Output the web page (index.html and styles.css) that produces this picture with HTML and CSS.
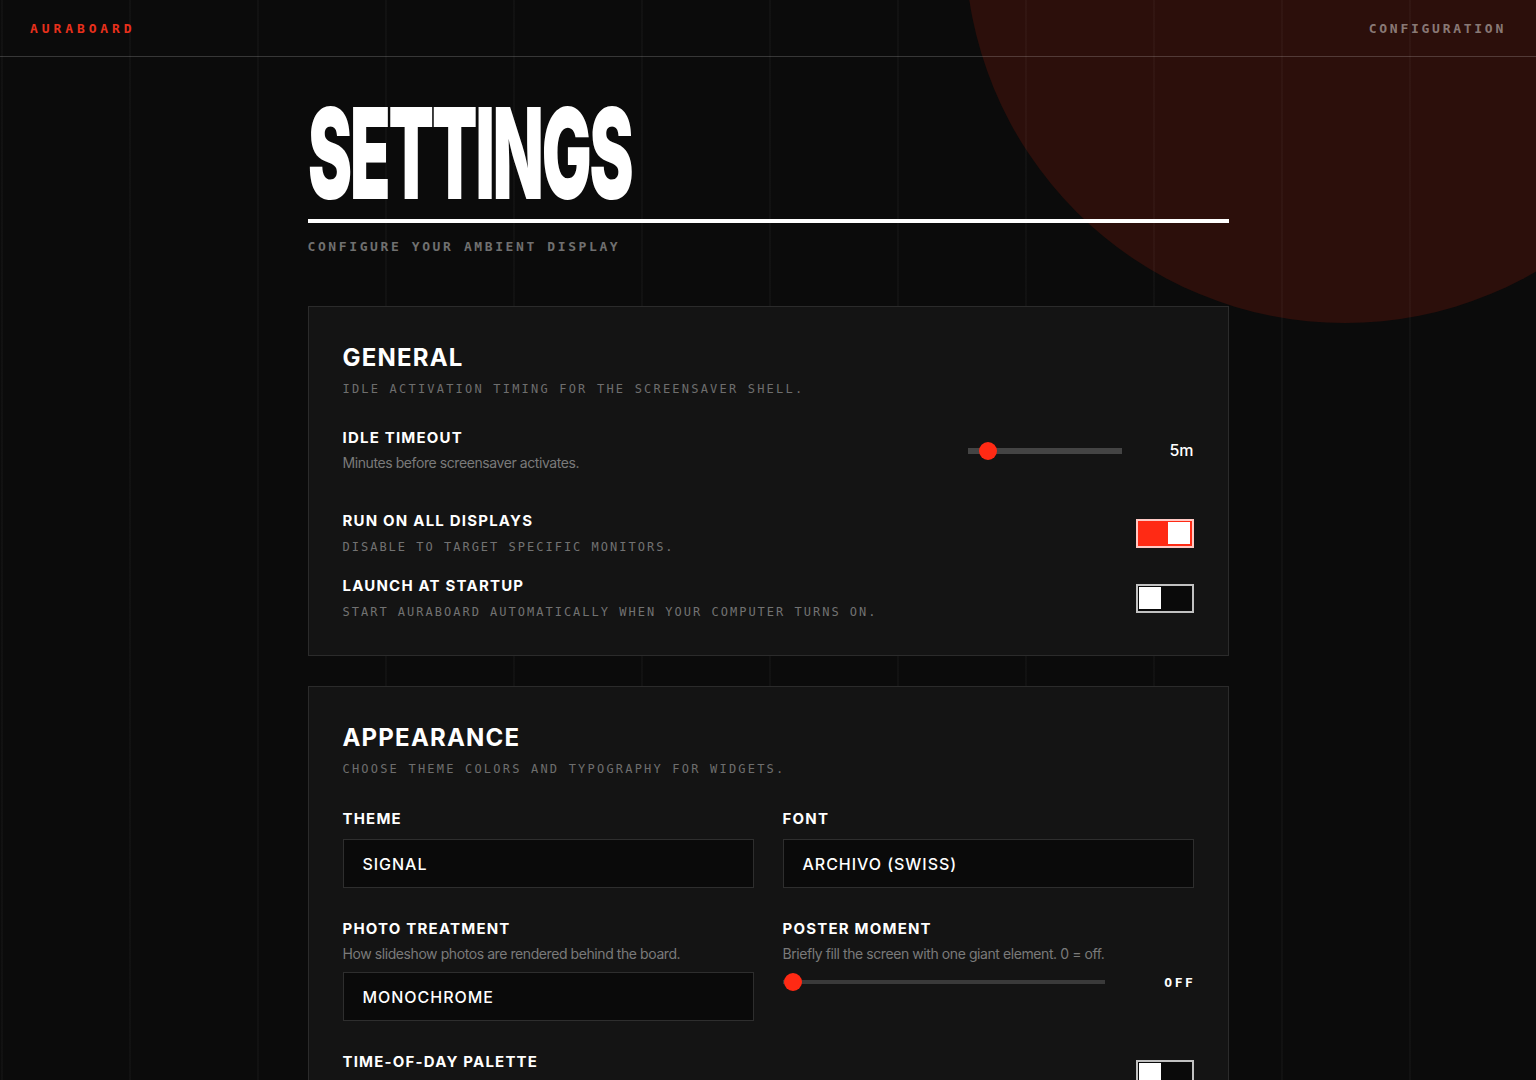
FILE: index.html
```html
<!DOCTYPE html>
<html lang="en">
<head>
    <meta charset="UTF-8">
    <meta name="viewport" content="width=device-width, initial-scale=1.0">
    <title>Auraboard — Settings</title>
    <link rel="stylesheet" href="styles.css">
</head>
<body>
    <div class="backdrop">
        <div class="glow-disc"></div>
        <div class="grid-lines"></div>
    </div>

    <header class="topbar">
        <span class="brand">AURABOARD</span>
        <span class="crumb">CONFIGURATION</span>
    </header>

    <main class="settings">
        <div class="settings-head">
            <h1 class="settings-title"><span>SETTINGS</span></h1>
        </div>
        <p class="settings-sub">CONFIGURE YOUR AMBIENT DISPLAY</p>

        <!-- General -->
        <section class="panel">
            <h2 class="panel-title">GENERAL</h2>
            <p class="panel-desc">IDLE ACTIVATION TIMING FOR THE SCREENSAVER SHELL.</p>

            <div class="panel-body">
                <div class="row row-slider">
                    <div class="row-text">
                        <div class="field-label">IDLE TIMEOUT</div>
                        <div class="field-help">Minutes before screensaver activates.</div>
                    </div>
                    <div class="slider slider-short">
                        <div class="slider-track">
                            <span class="slider-thumb" style="left: 11px"></span>
                        </div>
                        <span class="slider-value">5m</span>
                    </div>
                </div>

                <div class="row">
                    <div class="row-text">
                        <div class="field-label">RUN ON ALL DISPLAYS</div>
                        <div class="field-note">DISABLE TO TARGET SPECIFIC MONITORS.</div>
                    </div>
                    <button class="toggle is-on" type="button"><span class="toggle-knob"></span></button>
                </div>

                <div class="row">
                    <div class="row-text">
                        <div class="field-label">LAUNCH AT STARTUP</div>
                        <div class="field-note">START AURABOARD AUTOMATICALLY WHEN YOUR COMPUTER TURNS ON.</div>
                    </div>
                    <button class="toggle" type="button"><span class="toggle-knob"></span></button>
                </div>
            </div>
        </section>

        <!-- Appearance -->
        <section class="panel">
            <h2 class="panel-title">APPEARANCE</h2>
            <p class="panel-desc">CHOOSE THEME COLORS AND TYPOGRAPHY FOR WIDGETS.</p>

            <div class="panel-grid">
                <div class="field">
                    <div class="field-label">THEME</div>
                    <div class="select">SIGNAL</div>
                </div>
                <div class="field">
                    <div class="field-label">FONT</div>
                    <div class="select">ARCHIVO (SWISS)</div>
                </div>

                <div class="field">
                    <div class="field-label">PHOTO TREATMENT</div>
                    <div class="field-help">How slideshow photos are rendered behind the board.</div>
                    <div class="select">MONOCHROME</div>
                </div>
                <div class="field">
                    <div class="field-label">POSTER MOMENT</div>
                    <div class="field-help">Briefly fill the screen with one giant element. 0 = off.</div>
                    <div class="slider slider-wide">
                        <div class="slider-track">
                            <span class="slider-thumb" style="left: 1px"></span>
                        </div>
                        <span class="slider-value mono">OFF</span>
                    </div>
                </div>

                <div class="row row-full">
                    <div class="row-text">
                        <div class="field-label">TIME-OF-DAY PALETTE</div>
                        <div class="field-note">SHIFT THE PALETTE FROM DAWN TO NIGHT.</div>
                    </div>
                    <button class="toggle" type="button"><span class="toggle-knob"></span></button>
                </div>
            </div>
        </section>
    </main>
</body>
</html>
```

FILE: styles.css
```css
* {
    box-sizing: border-box;
}
html, body {
    margin: 0;
    padding: 0;
}
body {
    min-height: 100vh;
    background: #0b0b0b;
    color: #fff;
    font-family: Inter, "Noto Sans", sans-serif;
    position: relative;
}

/* decorative layer: red disc + column rules, clipped to the page */
.backdrop {
    position: absolute;
    inset: 0;
    overflow: hidden;
    z-index: 0;
    pointer-events: none;
}
.glow-disc {
    position: absolute;
    left: 965px;
    top: -437px;
    width: 760px;
    height: 760px;
    border-radius: 50%;
    background: #2c0f0b;
}
.grid-lines {
    position: absolute;
    inset: 0;
    background: repeating-linear-gradient(90deg,
        transparent 0 1px,
        rgba(255, 255, 255, 0.028) 1px 3px,
        transparent 3px 128px);
}

.topbar {
    position: relative;
    z-index: 2;
    height: 57px;
    padding: 0 30px;
    display: flex;
    align-items: center;
    justify-content: space-between;
    border-bottom: 1px solid rgba(255, 255, 255, 0.18);
    font-family: "DejaVu Sans Mono", monospace;
    font-size: 13px;
    font-weight: bold;
}
.brand {
    color: #e8301c;
    letter-spacing: 0.3em;
}
.crumb {
    color: rgba(255, 255, 255, 0.45);
    letter-spacing: 0.21em;
}

.settings {
    position: relative;
    z-index: 2;
    max-width: 921px;
    margin: 0 auto;
    padding-top: 33px;
}
.settings-head {
    padding-bottom: 3px;
    border-bottom: 4px solid #fff;
}
.settings-title {
    margin: 0;
    height: 126px;
    font-size: 126px;
    line-height: 1;
    font-weight: 900;
    letter-spacing: -0.03em;
    white-space: nowrap;
}
.settings-title span {
    display: inline-block;
    transform: scaleX(0.525);
    transform-origin: left center;
}
.settings-sub {
    margin: 16px 0 51px;
    font-family: "DejaVu Sans Mono", monospace;
    font-size: 13px;
    line-height: 16px;
    font-weight: bold;
    letter-spacing: 0.2em;
    color: #707070;
}

.panel {
    background: #141414;
    border: 1px solid #2b2b2b;
    padding: 36px 34px 35px;
    margin-bottom: 30px;
}
.panel-title {
    margin: 0;
    font-size: 24px;
    line-height: 30px;
    font-weight: 700;
    letter-spacing: 0.05em;
}
.panel-desc {
    margin: 8px 0 0;
    font-family: "DejaVu Sans Mono", monospace;
    font-size: 12px;
    line-height: 16px;
    letter-spacing: 2.2px;
    color: #6e6e6e;
}
.panel-body {
    margin-top: 31px;
}

.row {
    display: flex;
    align-items: center;
    justify-content: space-between;
    margin-bottom: 21px;
}
.row:last-child {
    margin-bottom: 0;
}
.row-slider {
    margin-bottom: 38px;
}

.field-label {
    font-size: 15px;
    line-height: 20px;
    font-weight: 700;
    letter-spacing: 0.08em;
}
.field-help {
    margin-top: 5px;
    font-size: 14px;
    line-height: 20px;
    letter-spacing: -0.03em;
    color: #7a7a7a;
}
.field-note {
    margin-top: 8px;
    font-family: "DejaVu Sans Mono", monospace;
    font-size: 12px;
    line-height: 16px;
    letter-spacing: 2px;
    color: #727272;
}

/* sliders drawn by hand so the thumb sits exactly */
.slider {
    display: flex;
    align-items: center;
    gap: 24px;
}
.slider-track {
    position: relative;
    height: 6px;
    background: #444;
}
.slider-short {
    margin-top: -2px;
}
.slider-short .slider-track {
    width: 154px;
    margin-top: 2px;
}
.slider-short .slider-value {
    width: 48px;
}
.slider-wide {
    margin-top: 8px;
    height: 20px;
}
.slider-wide .slider-track {
    flex: 1;
    height: 4px;
    background: #3a3a3a;
}
.slider-wide .slider-value {
    width: 67px;
}
.slider-thumb {
    position: absolute;
    top: 50%;
    width: 18px;
    height: 18px;
    margin-top: -9px;
    border-radius: 50%;
    background: #ff2a14;
}
.slider-value {
    text-align: right;
    font-size: 16px;
    font-weight: 500;
}
.slider-value.mono {
    font-family: "DejaVu Sans Mono", monospace;
    font-size: 13px;
    font-weight: bold;
    letter-spacing: 0.2em;
    margin-right: -2px;
}

.toggle {
    width: 58px;
    height: 29px;
    padding: 1.5px;
    border: 2px solid rgba(255, 255, 255, 0.75);
    background: #0a0a0a;
    display: flex;
    align-items: center;
    justify-content: flex-start;
    cursor: pointer;
}
.toggle.is-on {
    background: #ff2a14;
    justify-content: flex-end;
}
.toggle-knob {
    width: 22px;
    height: 22px;
    background: #fff;
}

.panel-grid {
    margin-top: 32px;
    display: grid;
    grid-template-columns: 1fr 1fr;
    column-gap: 29px;
    row-gap: 31px;
}
.row-full {
    grid-column: 1 / -1;
}
.select {
    margin-top: 10px;
    height: 49px;
    padding: 0 19px;
    display: flex;
    align-items: center;
    background: #0a0a0a;
    border: 1px solid #2e2e2e;
    font-size: 16px;
    font-weight: 500;
    letter-spacing: 0.06em;
}
.field-help + .select {
    margin-top: 8px;
}
```
